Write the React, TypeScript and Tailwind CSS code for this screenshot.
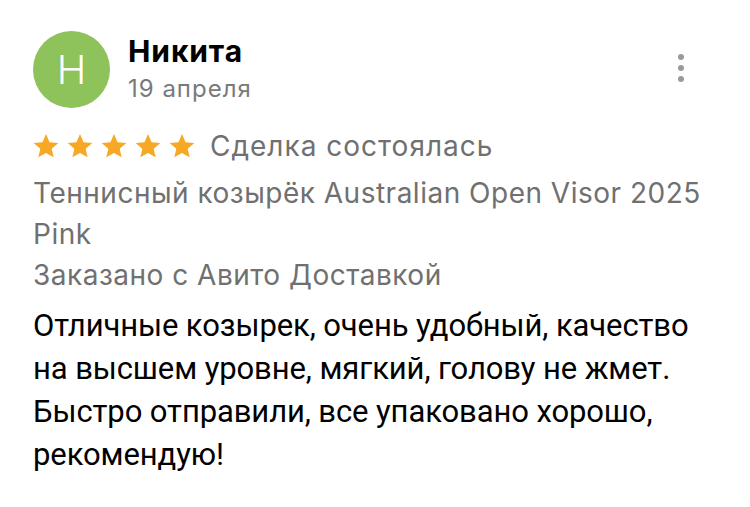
import React from 'react'

const Star = () => (
  <svg viewBox="0 0 24 24" className="w-[28px] h-[28px]">
    <path fill="#F7A824" d="M12 1.8l3.05 6.9 7.5.7-5.67 4.98 1.68 7.36L12 17.9l-6.56 3.84 1.68-7.36L1.45 9.4l7.5-.7z" />
  </svg>
)

const App = () => {
  return (
    <div className="w-[750px] h-[507px] bg-white font-['Inter','Roboto',sans-serif] overflow-hidden">
      <div className="pl-[33px] pr-[36px] pt-[31px]">
        {/* шапка */}
        <div className="flex items-start">
          <div className="w-[77px] h-[77px] rounded-full bg-[#8DC35A] flex items-center justify-center shrink-0">
            <span className="text-white text-[40px] font-light leading-none">H</span>
          </div>
          <div className="ml-[18px] flex-1 pt-[2px]">
            <div className="text-[30px] font-bold text-black leading-[36px] tracking-[0.9px]">Никита</div>
            <div className="text-[24px] text-[#7a7a7a] leading-[30px] mt-[5px] tracking-[1px]">19 апреля</div>
          </div>
          <div className="flex flex-col gap-[5px] mt-[23px] mr-[30px]">
            <div className="w-[6px] h-[6px] rounded-full bg-[#9a9a9a]"></div>
            <div className="w-[6px] h-[6px] rounded-full bg-[#9a9a9a]"></div>
            <div className="w-[6px] h-[6px] rounded-full bg-[#9a9a9a]"></div>
          </div>
        </div>

        <div className="flex items-center mt-[23px]">
          <div className="flex gap-[6px] -ml-[1px]">
            {[0, 1, 2, 3, 4].map((i) => (
              <Star key={i} />
            ))}
          </div>
          <span className="ml-[14px] text-[28px] text-[#707070] leading-[30px] tracking-[1px]">Сделка состоялась</span>
        </div>

        <div className="mt-[12px] text-[28px] text-[#707070] leading-[41px] tracking-[0.5px]">
          Теннисный козырёк Australian Open Visor 2025 Pink
        </div>
        <div className="text-[28px] text-[#707070] leading-[41px] tracking-[0.5px]">
          Заказано с Авито Доставкой
        </div>

        <div className="mt-[8px] text-[31px] text-black leading-[43px] font-['Roboto',sans-serif] tracking-[-0.1px]">
          Отличные козырек, очень удобный, качество на высшем уровне, мягкий, голову не жмет. Быстро отправили, все упаковано хорошо, рекомендую!
        </div>
      </div>
    </div>
  )
}

export default App
